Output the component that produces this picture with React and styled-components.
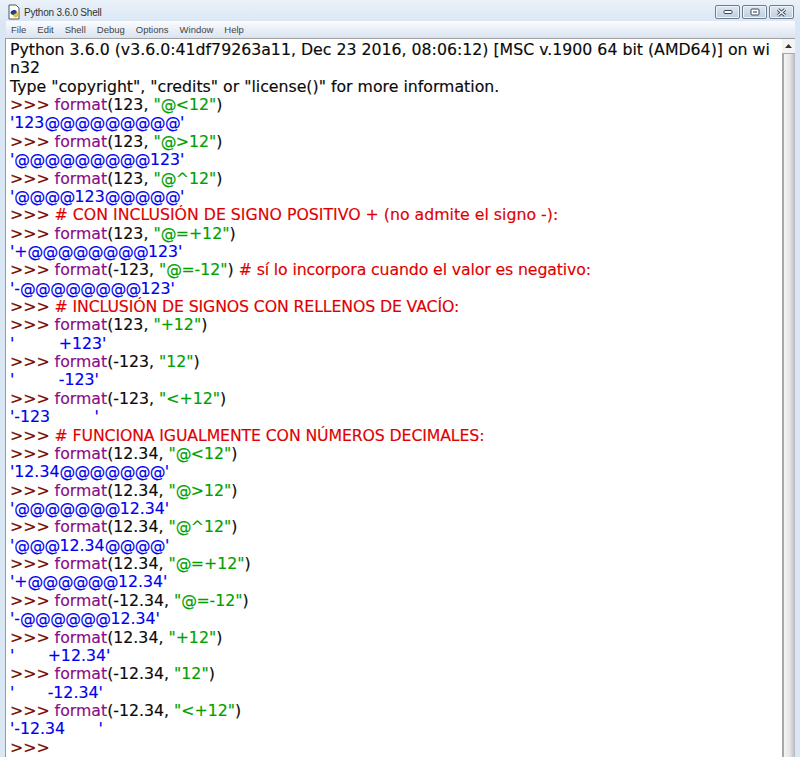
import React from 'react';
import styled, { createGlobalStyle } from 'styled-components';

const GlobalStyle = createGlobalStyle`
  html, body { margin: 0; padding: 0; background: #d9e6f4; }
  body { width: 800px; height: 757px; overflow: hidden; }
`;

// p = prompt, f = builtin, s = string, o = output, c = comment, n = narrower comment, t = plain
const call = (args, str, rest = ')') => [
  ['p', '>>> '],
  ['f', 'format'],
  ['t', `(${args}, `],
  ['s', `"${str}"`],
  ['t', rest],
];
const out = (text) => [['o', text]];
const comment = (text, kind = 'c') => [['p', '>>> '], [kind, text]];

const LINES = [
  [['t', 'Python 3.6.0 (v3.6.0:41df79263a11, Dec 23 2016, 08:06:12) [MSC v.1900 64 bit (AMD64)] on wi']],
  [['t', 'n32']],
  [['t', 'Type "copyright", "credits" or "license()" for more information.']],
  call('123', '@<12'),
  out("'123@@@@@@@@@'"),
  call('123', '@>12'),
  out("'@@@@@@@@@123'"),
  call('123', '@^12'),
  out("'@@@@123@@@@@'"),
  comment('# CON INCLUSIÓN DE SIGNO POSITIVO + (no admite el signo -):'),
  call('123', '@=+12'),
  out("'+@@@@@@@@123'"),
  [...call('-123', '@=-12', ') '), ['n', '# sí lo incorpora cuando el valor es negativo:']],
  out("'-@@@@@@@@123'"),
  comment('# INCLUSIÓN DE SIGNOS CON RELLENOS DE VACÍO:', 'n'),
  call('123', '+12'),
  out("'        +123'"),
  call('-123', '12'),
  out("'        -123'"),
  call('-123', '<+12'),
  out("'-123        '"),
  comment('# FUNCIONA IGUALMENTE CON NÚMEROS DECIMALES:', 'n'),
  call('12.34', '@<12'),
  out("'12.34@@@@@@@'"),
  call('12.34', '@>12'),
  out("'@@@@@@@12.34'"),
  call('12.34', '@^12'),
  out("'@@@12.34@@@@'"),
  call('12.34', '@=+12'),
  out("'+@@@@@@12.34'"),
  call('-12.34', '@=-12'),
  out("'-@@@@@@12.34'"),
  call('12.34', '+12'),
  out("'      +12.34'"),
  call('-12.34', '12'),
  out("'      -12.34'"),
  call('-12.34', '<+12'),
  out("'-12.34      '"),
  [['p', '>>>']],
];

const MENU = ['File', 'Edit', 'Shell', 'Debug', 'Options', 'Window', 'Help'];

const TOKEN_COLORS = {
  p: '#7a0a00',
  f: '#8a0a8a',
  s: '#00a000',
  o: '#0000f0',
  c: '#e00000',
  n: '#e00000',
  t: '#0a0a0a',
};

const Window = styled.div`
  width: 800px;
  height: 757px;
  display: flex;
  flex-direction: column;
  overflow: hidden;
  font-family: 'DejaVu Sans', sans-serif;
  background: #d9e6f4;
`;

const TitleBar = styled.div`
  height: 21px;
  display: flex;
  justify-content: space-between;
  padding: 0 6px 0 7px;
  background: linear-gradient(#eaf1f9, #dbe7f4);
`;

const TitleLeft = styled.div`
  display: flex;
  align-items: center;
  gap: 1px;
  padding-top: 3px;
`;

const TitleText = styled.span`
  font-family: 'Liberation Sans', sans-serif;
  font-size: 10px;
  letter-spacing: -0.2px;
  color: #333;
`;

const WinButtons = styled.div`
  display: flex;
  gap: 2px;
  padding-top: 5px;
`;

const WinButton = styled.div`
  width: 23px;
  height: 12px;
  display: flex;
  align-items: center;
  justify-content: center;
  border: 1px solid #6d7d90;
  border-radius: 2px;
  box-shadow: inset 0 0 0 1px #eef3f9;
  background: linear-gradient(#dfe8f2, #bfcde0);
`;

const MenuBar = styled.div`
  height: 17px;
  margin: 0 5px 0 6px;
  display: flex;
  align-items: center;
  gap: 11px;
  padding-left: 5px;
  background: linear-gradient(#fbfcfe, #d9e3f1);
  font-family: 'Liberation Sans', sans-serif;
  font-size: 9.5px;
  color: #444;
`;

const Body = styled.div`
  flex: 1;
  min-height: 0;
  display: flex;
  margin: 0 5px 0 5px;
  border-top: 1px solid #a0a0a0;
  border-left: 1px solid #9a9a9a;
`;

const Shell = styled.div`
  flex: 1;
  min-width: 0;
  padding: 2px 0 0 4px;
  background: #fff;
  overflow: hidden;
`;

const Line = styled.div`
  height: 18.37px;
  line-height: 18.37px;
  font-size: 15.75px;
  white-space: pre;
  -webkit-text-stroke: 0.15px currentColor;
`;

const Token = styled.span`
  color: ${(p) => TOKEN_COLORS[p.$kind]};
  word-spacing: ${(p) => (p.$kind === 'o' ? '0.55px' : '0')};
  letter-spacing: ${(p) => (p.$kind === 'n' ? '-0.13px' : '0')};
`;

// the @ of the original font is narrower than DejaVu's
const AtSign = styled.span`
  letter-spacing: -0.7px;
`;

const ScrollBar = styled.div`
  width: 13px;
  display: flex;
  flex-direction: column;
  background: #ececec;
`;

const ScrollUp = styled.div`
  height: 14px;
  display: flex;
  align-items: center;
  justify-content: center;
  background: #f4f4f4;
`;

const ScrollThumb = styled.div`
  flex: 1;
  border-left: 2px solid #a8a8a8;
  border-top: 1px solid #a8a8a8;
  background: linear-gradient(90deg, #f4f4f4, #e4e4e4 55%, #b8b8c0);
`;

const renderText = (text) =>
  text.split(/(@)/).map((part, i) => (part === '@' ? <AtSign key={i}>@</AtSign> : part));

const App = () => (
  <Window>
    <GlobalStyle />
    <TitleBar>
      <TitleLeft>
        <svg width="16" height="16" viewBox="0 0 16 16">
          <path d="M2 1h7l3 3v11H2z" fill="#fff" stroke="#555" />
          <path d="M3.5 8c2-2.5 5-2.5 6-1s-1 4-3 4-3-1-3-3z" fill="#1f3f86" />
          <path d="M6 11c2-1 4-3 5-3s1 4-1 5-4 0-4-2z" fill="#e8c030" />
        </svg>
        <TitleText>Python 3.6.0 Shell</TitleText>
      </TitleLeft>
      <WinButtons>
        <WinButton>
          <svg width="10" height="6"><rect x="1" y="1.5" width="8" height="3" rx="1" fill="#fff" stroke="#3a4656" /></svg>
        </WinButton>
        <WinButton>
          <svg width="10" height="8"><rect x="1" y="1" width="8" height="6" rx="1" fill="#fff" stroke="#3a4656" /><rect x="3" y="3" width="4" height="2" fill="#8b98a8" /></svg>
        </WinButton>
        <WinButton>
          <svg width="11" height="9">
            <path d="M2 1.5l7 6M9 1.5l-7 6" stroke="#3a4656" strokeWidth="3" />
            <path d="M2 1.5l7 6M9 1.5l-7 6" stroke="#fff" strokeWidth="1.2" />
          </svg>
        </WinButton>
      </WinButtons>
    </TitleBar>
    <MenuBar>
      {MENU.map((item) => <span key={item}>{item}</span>)}
    </MenuBar>
    <Body>
      <Shell>
        {LINES.map((tokens, i) => (
          <Line key={i}>
            {tokens.map(([kind, text], j) => <Token key={j} $kind={kind}>{renderText(text)}</Token>)}
          </Line>
        ))}
      </Shell>
      <ScrollBar>
        <ScrollUp>
          <svg width="7" height="4"><path d="M3.5 0L7 4H0z" fill="#333" /></svg>
        </ScrollUp>
        <ScrollThumb />
      </ScrollBar>
    </Body>
  </Window>
);

export default App;
